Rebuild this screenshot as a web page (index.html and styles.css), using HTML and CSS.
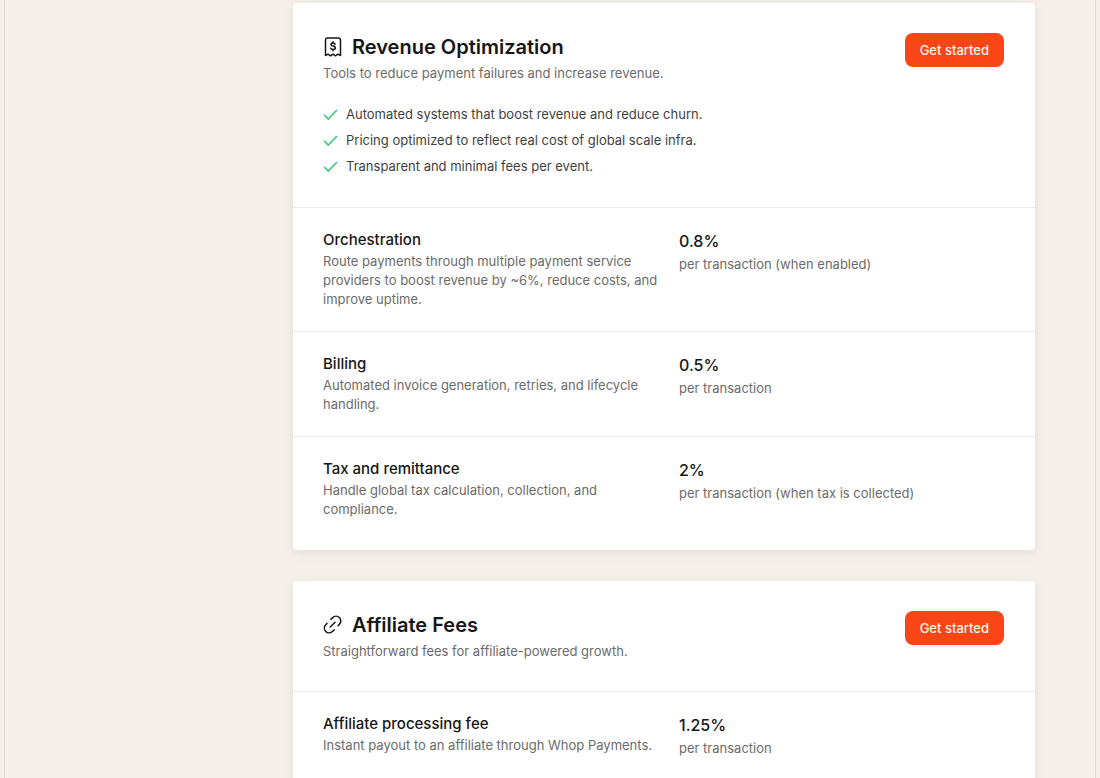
FILE: index.html
```html
<!DOCTYPE html>
<html lang="en">
<head>
<meta charset="utf-8">
<meta name="viewport" content="width=device-width, initial-scale=1">
<title>Pricing</title>
<link rel="stylesheet" href="styles.css">
</head>
<body>
<main class="page">
  <div class="cards">
    <section class="card">
      <header class="card-head">
        <div class="card-intro">
          <h2 class="card-title">
            <svg class="title-icon" viewBox="0 0 20 20" fill="none" stroke="currentColor" stroke-width="1.5" stroke-linecap="round" stroke-linejoin="round" aria-hidden="true">
              <path d="M2.5 18.5V3.2Q2.5 1 4.7 1H15.3Q17.5 1 17.5 3.2V18.5L15 17.2L12.5 18.8L10 17.2L7.5 18.8L5 17.2Z"/>
              <path d="M12.1 7.2Q11.7 6 10 6Q8 6 8 7.5Q8 8.8 10 9.1Q12.3 9.4 12.3 11Q12.3 12.5 10 12.5Q8.2 12.5 7.8 11.2M10 4.7V6M10 12.5V13.8"/>
            </svg>
            Revenue Optimization
          </h2>
          <p class="text">Tools to reduce payment failures and increase revenue.</p>
        </div>
        <button class="button" type="button">Get started</button>
        <ul class="features">
          <li class="feature"><svg class="check" viewBox="0 0 15 14" aria-hidden="true"><path d="M1.5 8.3L5.3 12.1L13.5 3.5"/></svg>Automated systems that boost revenue and reduce churn.</li>
          <li class="feature"><svg class="check" viewBox="0 0 15 14" aria-hidden="true"><path d="M1.5 8.3L5.3 12.1L13.5 3.5"/></svg>Pricing optimized to reflect real cost of global scale infra.</li>
          <li class="feature"><svg class="check" viewBox="0 0 15 14" aria-hidden="true"><path d="M1.5 8.3L5.3 12.1L13.5 3.5"/></svg>Transparent and minimal fees per event.</li>
        </ul>
      </header>
      <div class="row">
        <div>
          <h3 class="row-title">Orchestration</h3>
          <p class="text">Route payments through multiple payment service providers to boost revenue by ~6%, reduce costs, and improve uptime.</p>
        </div>
        <div>
          <p class="price">0.8%</p>
          <p class="text">per transaction (when enabled)</p>
        </div>
      </div>
      <div class="row">
        <div>
          <h3 class="row-title">Billing</h3>
          <p class="text">Automated invoice generation, retries, and lifecycle handling.</p>
        </div>
        <div>
          <p class="price">0.5%</p>
          <p class="text">per transaction</p>
        </div>
      </div>
      <div class="row">
        <div>
          <h3 class="row-title">Tax and remittance</h3>
          <p class="text">Handle global tax calculation, collection, and compliance.</p>
        </div>
        <div>
          <p class="price">2%</p>
          <p class="text">per transaction (when tax is collected)</p>
        </div>
      </div>
    </section>

    <section class="card">
      <header class="card-head">
        <div class="card-intro">
          <h2 class="card-title">
            <svg class="title-icon" viewBox="0 0 21 21" fill="none" stroke="currentColor" stroke-width="1.6" stroke-linecap="round" stroke-linejoin="round" aria-hidden="true">
              <path d="M7.6 12.6L12.6 7.6"/>
              <path d="M8.3 4.4L10.2 2.7A4.5 4.5 0 0 1 17.3 9.6L15.8 11.3"/>
              <path d="M4.2 8.8L2.9 10.3A4.5 4.5 0 0 0 9.8 17.3L11.7 15.6"/>
            </svg>
            Affiliate Fees
          </h2>
          <p class="text">Straightforward fees for affiliate-powered growth.</p>
        </div>
        <button class="button" type="button">Get started</button>
      </header>
      <div class="row">
        <div>
          <h3 class="row-title">Affiliate processing fee</h3>
          <p class="text">Instant payout to an affiliate through Whop Payments.</p>
        </div>
        <div>
          <p class="price">1.25%</p>
          <p class="text">per transaction</p>
        </div>
      </div>
    </section>
  </div>
</main>
</body>
</html>
```
FILE: styles.css
```css
* {
  box-sizing: border-box;
}

html {
  background: #f5efe9;
}

body {
  margin: 0;
  color: #161616;
  font-family: Inter, "Liberation Sans", sans-serif;
  font-size: 13px;
  line-height: 19px;
}

h2,
h3,
p,
ul {
  margin: 0;
  padding: 0;
}

.page {
  min-height: 100vh;
  margin: 0 4px;
  padding: 3px 60px 0 288px;
  border: solid #ddd8d2;
  border-width: 0 1px;
}

.cards {
  display: grid;
  gap: 31px;
}

.card {
  padding-bottom: 9px;
  border-radius: 4px;
  background: #fff;
  box-shadow: 0 2px 6px rgba(60, 45, 30, 0.06), 0 4px 20px rgba(60, 45, 30, 0.03);
}

.card-head {
  display: grid;
  grid-template-columns: 1fr auto;
  align-items: start;
  padding: 30px 31px 30px 30px;
}

.card-title {
  display: flex;
  align-items: center;
  gap: 9px;
  margin-bottom: 3px;
  font-size: 20px;
  font-weight: 600;
  line-height: 28px;
}

.title-icon {
  width: 20px;
  height: 20px;
}

.text {
  color: #6b6b6b;
}

.button {
  height: 34px;
  padding: 0 15px;
  border: 0;
  border-radius: 8px;
  background: #fa4616;
  color: #fff3ee;
  font: 500 13px/19px Inter, "Liberation Sans", sans-serif;
  cursor: pointer;
}

.features {
  display: grid;
  grid-column: 1 / -1;
  gap: 6px;
  margin: 21px 0 1px;
  list-style: none;
}

.feature {
  display: flex;
  align-items: center;
  gap: 8px;
  color: #3f3f3f;
  line-height: 20px;
}

.check {
  width: 15px;
  height: 14px;
  fill: none;
  stroke: #2fc875;
  stroke-width: 1.5;
  stroke-linecap: round;
  stroke-linejoin: round;
}

.row {
  display: grid;
  grid-template-columns: 344fr 326fr;
  gap: 12px;
  padding: 21px 30px 22px;
  border-top: 1px solid #ececec;
}

.row-title {
  margin-bottom: 1px;
  font-size: 15px;
  font-weight: 500;
  line-height: 22px;
}

.price {
  margin-bottom: 2px;
  font-size: 16px;
  font-weight: 500;
  line-height: 24px;
}
```
